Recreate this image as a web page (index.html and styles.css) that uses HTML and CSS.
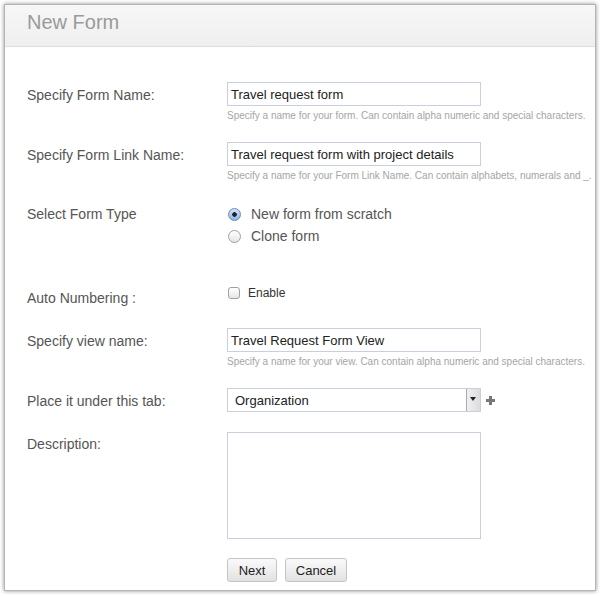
FILE: index.html
```html
<!DOCTYPE html>
<html lang="en">
<head>
    <meta charset="UTF-8">
    <title>New Form</title>
    <link rel="stylesheet" href="styles.css">
</head>
<body>
    <div class="dialog">
        <div class="dialog-header">New Form</div>
        <form class="dialog-body">
            <div class="row row-name">
                <label class="field-label">Specify Form Name:</label>
                <div class="field">
                    <input type="text" class="text-input" value="Travel request form">
                    <p class="hint">Specify a name for your form. Can contain alpha numeric and special characters.</p>
                </div>
            </div>
            <div class="row row-link">
                <label class="field-label">Specify Form Link Name:</label>
                <div class="field">
                    <input type="text" class="text-input" value="Travel request form with project details">
                    <p class="hint">Specify a name for your Form Link Name. Can contain alphabets, numerals and _.</p>
                </div>
            </div>
            <div class="row row-type">
                <label class="field-label">Select Form Type</label>
                <div class="field">
                    <label class="radio-line"><input type="radio" name="type" checked> New form from scratch</label>
                    <label class="radio-line"><input type="radio" name="type"> Clone form</label>
                </div>
            </div>
            <div class="row row-auto">
                <label class="field-label">Auto Numbering :</label>
                <div class="field">
                    <label class="check-line"><input type="checkbox"> Enable</label>
                </div>
            </div>
            <div class="row row-view">
                <label class="field-label">Specify view name:</label>
                <div class="field">
                    <input type="text" class="text-input" value="Travel Request Form View">
                    <p class="hint">Specify a name for your view. Can contain alpha numeric and special characters.</p>
                </div>
            </div>
            <div class="row row-tab">
                <label class="field-label">Place it under this tab:</label>
                <div class="field select-wrap">
                    <div class="select-box">
                        <span>Organization</span>
                        <span class="select-arrow"></span>
                    </div>
                    <span class="plus"></span>
                </div>
            </div>
            <div class="row row-desc">
                <label class="field-label">Description:</label>
                <div class="field">
                    <textarea class="text-area"></textarea>
                </div>
            </div>
            <div class="row row-buttons">
                <span></span>
                <div class="field buttons">
                    <button type="button" class="btn">Next</button>
                    <button type="button" class="btn">Cancel</button>
                </div>
            </div>
        </form>
    </div>
</body>
</html>
```

FILE: styles.css
```css
body {
    margin: 0;
    background: #fff;
    font-family: 'Liberation Sans', Arial, sans-serif;
}
.dialog {
    margin: 4px;
    width: 592px;
    height: 587px;
    border: 1px solid #b5b5b5;
    box-shadow: 0 0 4px rgba(0, 0, 0, 0.45);
    background: #fff;
    box-sizing: border-box;
}
.dialog-header {
    height: 42px;
    box-sizing: border-box;
    padding: 6px 0 0 22px;
    font-size: 20px;
    color: #9a9a9a;
    background: linear-gradient(#f7f7f7, #efefef);
    border-bottom: 1px solid #dcdcdc;
}
.dialog-body {
    padding: 35px 0 0 22px;
}
.row {
    display: grid;
    grid-template-columns: 200px 1fr;
}
.field-label {
    font-size: 14px;
    color: #555;
    padding-top: 5px;
    line-height: 16px;
}
.text-input {
    display: block;
    width: 254px;
    height: 24px;
    box-sizing: border-box;
    border: 1px solid #c8cfdf;
    padding: 0 3px;
    font-family: inherit;
    font-size: 13px;
    color: #222;
}
.hint {
    margin: 3px 0 0;
    font-size: 10px;
    line-height: 13px;
    color: #a5a5a5;
    white-space: nowrap;
}
.row-name {
    margin-bottom: 20px;
}
.row-link {
    margin-bottom: 21px;
}
.row-type {
    margin-bottom: 38px;
}
.row-type .field-label {
    padding-top: 3px;
}
.radio-line {
    display: flex;
    align-items: center;
    gap: 10px;
    height: 22px;
    font-size: 14px;
    color: #555;
}
.radio-line input {
    appearance: none;
    margin: 0 0 0 1px;
    width: 13px;
    height: 13px;
    border-radius: 50%;
    border: 1px solid #a0a0a0;
    background: linear-gradient(#fff, #e4e4e4);
}
.radio-line input:checked {
    border-color: #6d8bb5;
    background: radial-gradient(circle, #222 0 2px, transparent 2.5px), linear-gradient(#cfe2f9, #8db6ea);
}
.row-auto {
    margin-bottom: 22px;
}
.row-auto .field-label {
    padding-top: 5px;
}
.check-line {
    display: flex;
    align-items: center;
    gap: 8px;
    height: 15px;
    font-size: 12px;
    color: #333;
}
.check-line input {
    appearance: none;
    margin: 0 0 0 1px;
    width: 12px;
    height: 12px;
    border: 1px solid #a0a0a0;
    border-radius: 3px;
    background: linear-gradient(#fff, #e6e6e6);
}
.row-view {
    margin-bottom: 20px;
}
.select-wrap {
    display: flex;
    align-items: center;
    gap: 5px;
}
.select-box {
    width: 254px;
    height: 24px;
    box-sizing: border-box;
    border: 1px solid #c8cfdf;
    display: flex;
    align-items: center;
    justify-content: space-between;
    padding-left: 7px;
    font-size: 13px;
    color: #222;
}
.select-arrow {
    width: 13px;
    height: 22px;
    border-left: 1px solid #aaa;
    background: linear-gradient(90deg, #f0f0f0, #dcdcdc);
    position: relative;
}
.select-arrow::after {
    content: "";
    position: absolute;
    left: 3px;
    top: 8px;
    border-left: 3px solid transparent;
    border-right: 3px solid transparent;
    border-top: 4px solid #222;
}
.plus {
    width: 9px;
    height: 9px;
    background:
        linear-gradient(#777, #777) center / 9px 3px no-repeat,
        linear-gradient(#777, #777) center / 3px 9px no-repeat;
}
.row-tab {
    margin-bottom: 20px;
}
.row-desc .field-label {
    padding-top: 4px;
}
.text-area {
    display: block;
    width: 254px;
    height: 107px;
    box-sizing: border-box;
    border: 1px solid #c8cfdf;
    resize: none;
}
.row-desc {
    margin-bottom: 19px;
}
.buttons {
    display: flex;
    gap: 8px;
}
.btn {
    height: 24px;
    padding: 0;
    border: 1px solid #c4c4c4;
    border-radius: 3px;
    background: linear-gradient(#fafafa, #e2e2e2);
    font-family: inherit;
    font-size: 13px;
    color: #222;
}
.btn:first-child {
    width: 50px;
}
.btn:last-child {
    width: 62px;
}
```
